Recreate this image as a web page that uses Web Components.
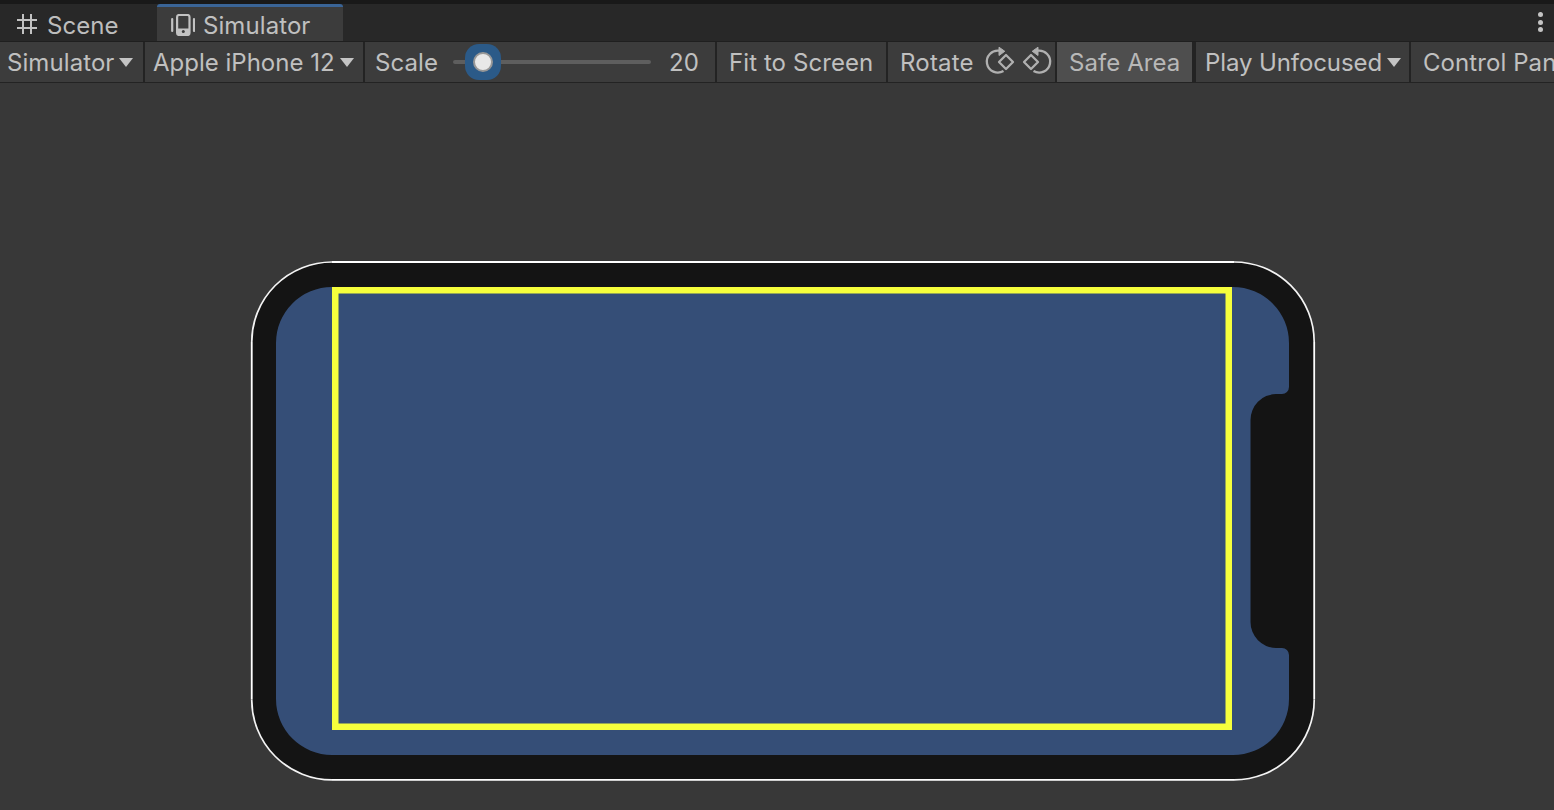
<!DOCTYPE html>
<html lang="en"><head><meta charset="utf-8"><title>Simulator</title>
<style>html,body{margin:0;height:100%;background:#383838;overflow:hidden}</style>
</head><body>
<sim-app>
  <sim-tabbar>
    <sim-tab style="width:156px">
      <svg slot="icon" width="20" height="20" viewBox="0 0 20 20" fill="none" stroke="#c2c2c2" stroke-width="2"><path d="M6 0V20M14 0V20M0 6H20M0 14H20"/></svg>
      Scene</sim-tab>
    <sim-tab active style="width:186px">
      <svg slot="icon" width="24" height="22" viewBox="0 0 24 22" fill="none" stroke="#c2c2c2"><rect x="6.100" y="1" width="12.400" height="20" rx="2" stroke-width="2.200"/><path d="M6 14.500H18.600V19.500a1.500 1.500 0 0 1-1.500 1.500H7.500a1.500 1.500 0 0 1-1.500-1.500Z" fill="#c2c2c2" stroke="none"/><circle cx="12.300" cy="17.500" r="1.500" fill="#3c3c3c" stroke="none"/><path d="M1.200 5V17M23 5V17" stroke-width="2.200" stroke-linecap="round"/></svg>
      Simulator</sim-tab>
    <sim-kebab></sim-kebab>
  </sim-tabbar>
  <sim-toolbar>
    <sim-tool menu style="width:143px;--pad:7px;letter-spacing:.08px">Simulator</sim-tool>
    <sim-tool menu style="width:218px;letter-spacing:0">Apple iPhone 12</sim-tool>
    <sim-tool style="width:350px;--pad:10px">Scale<sim-slider></sim-slider><span style="margin-left:18px">20</span></sim-tool>
    <sim-tool style="width:169px;--pad:12px">Fit to Screen</sim-tool>
    <sim-tool style="width:167px;--pad:12px;letter-spacing:.2px">Rotate
      <svg width="29" height="30" viewBox="0 0 29 30" fill="none" stroke="#b0b0b0" style="margin-left:11px;flex:none;overflow:visible"><path d="M14.500 3.700A11 11 0 1 0 18.500 24" stroke-width="2.300"/><path d="M14 0.200V8.500L19.800 4.300Z" fill="#b0b0b0" stroke-width="1"/><path d="M21 8L28 15L21 22L14 15Z" stroke-width="2.300" stroke-linejoin="round"/></svg>
      <svg width="29" height="30" viewBox="0 0 29 30" fill="none" stroke="#b0b0b0" style="margin-left:9.500px;flex:none;overflow:visible;transform:scaleX(-1)"><path d="M14.500 3.700A11 11 0 1 0 18.500 24" stroke-width="2.300"/><path d="M14 0.200V8.500L19.800 4.300Z" fill="#b0b0b0" stroke-width="1"/><path d="M21 8L28 15L21 22L14 15Z" stroke-width="2.300" stroke-linejoin="round"/></svg>
    </sim-tool>
    <sim-tool on style="width:135px;--pad:12px">Safe Area</sim-tool>
    <sim-tool menu style="width:213px;--pad:9px;margin-left:2px;letter-spacing:-.1px">Play Unfocused</sim-tool>
    <sim-tool style="width:160px;--pad:12px">Control Panel</sim-tool>
  </sim-toolbar>
  <sim-device></sim-device>
</sim-app>
<script>
function def(name, css, html){
  customElements.define(name, class extends HTMLElement{
    constructor(){super();const r=this.attachShadow({mode:'open'});r.innerHTML='<style>'+css+'</style>'+html;}
  });
}
def('sim-app',
 ':host{display:flex;flex-direction:column;width:1554px;height:810px;background:#383838;font:24px Inter,"Liberation Sans",sans-serif;letter-spacing:.08px;color:#c0c0c0;overflow:hidden}',
 '<slot></slot>');
def('sim-tabbar',
 ':host{display:flex;flex:none;margin-top:4px;background:#282828;box-shadow:0 -4px 0 #191919;border-bottom:1px solid #1f1f1f;box-sizing:content-box;height:37px}',
 '<slot></slot>');
def('sim-tab',
 ':host{display:flex;align-items:center;box-sizing:border-box;height:37px;flex:none;background:#282828;color:#bdbdbd;padding:3px 0 0 17px;gap:10px;margin-right:1px}'+
 ':host([active]){background:#3c3c3c;color:#c0c0c0;border-top:3px solid #3a6496;border-radius:3px 3px 0 0;padding:1px 0 0 14px;gap:8px}'+
 '::slotted(svg){flex:none}.t{display:block;padding-top:3px}:host([active]) .t{padding-top:1px}',
 '<slot name="icon"></slot><span class="t"><slot></slot></span>');
def('sim-kebab',
 ':host{display:flex;flex-direction:column;gap:2.500px;margin-left:auto;margin-right:11px;align-self:center;margin-top:-1px}'+
 'i{display:block;width:5px;height:5px;border-radius:50%;background:#c4c4c4}',
 '<i></i><i></i><i></i>');
def('sim-toolbar',
 ':host{display:flex;flex:none;height:40px;gap:2px;background:#232323;border-bottom:1px solid #232323;box-sizing:content-box;overflow:hidden}',
 '<slot></slot>');
def('sim-tool',
 ':host{display:flex;align-items:center;box-sizing:border-box;height:40px;flex:none;background:#3c3c3c;padding-left:var(--pad,8px);white-space:nowrap;overflow:hidden}'+
 ':host([on]){background:#4e4e4e;color:#b8b8b8}'+
 '.arrow{display:none;flex:none;margin-left:5px;width:0;height:0;border-left:7.500px solid transparent;border-right:7.500px solid transparent;border-top:9px solid #c4c4c4}'+
 ':host([menu]) .arrow{display:block}',
 '<slot></slot><span class="arrow"></span>');
def('sim-slider',
 ':host{display:block;position:relative;flex:none;width:198px;height:4px;margin-left:15px;background:#5e5e5e;border-radius:2px}'+
 '.halo{position:absolute;left:12px;top:-16px;width:36px;height:36px;border-radius:14px;background:#2b5a88;display:flex;align-items:center;justify-content:center}'+
 '.thumb{width:20px;height:20px;box-sizing:border-box;border-radius:50%;background:#e8e8e8;border:2px solid #979797}',
 '<div class="halo"><div class="thumb"></div></div>');
def('sim-device',
 ':host{display:block;flex:none;width:1066px;height:522px;margin:177px 0 0 250px}svg{display:block}',
 '<svg width="1066" height="522" viewBox="250 260 1066 522">'+
 '<path d="M332 262H1234A80 80 0 0 1 1314.200 342V699.500A80 80 0 0 1 1234 779.900H332A80.500 80 0 0 1 251.750 699.500V342A80.500 80 0 0 1 332 262Z" fill="#141414"/>'+
 '<path d="M332 287H1233A56 56 0 0 1 1289 343V387A7 7 0 0 1 1282 394H1276A26 26 0 0 0 1250.500 420V622A26 26 0 0 0 1276 648H1282A7 7 0 0 1 1289 655V699A56 56 0 0 1 1233 755H332A56 56 0 0 1 276 699V343A56 56 0 0 1 332 287Z" fill="#354e77"/>'+
 '<rect x="335.250" y="290.250" width="893.500" height="436.500" fill="none" stroke="#f6ff3c" stroke-width="6.500"/>'+
 '<path d="M332 262H1234M1314.200 342V699.500M1234 779.900H332M251.750 699.500V342" fill="none" stroke="#fff" stroke-width="1.800"/>'+
 '<path d="M1234 262A80 80 0 0 1 1314.200 342M1314.200 699.500A80 80 0 0 1 1234 779.900M332 779.900A80.500 80 0 0 1 251.750 699.500M251.750 342A80.500 80 0 0 1 332 262" fill="none" stroke="#f4f4f4" stroke-width="1.700"/>'+
 '</svg>');
</script>
</body></html>
